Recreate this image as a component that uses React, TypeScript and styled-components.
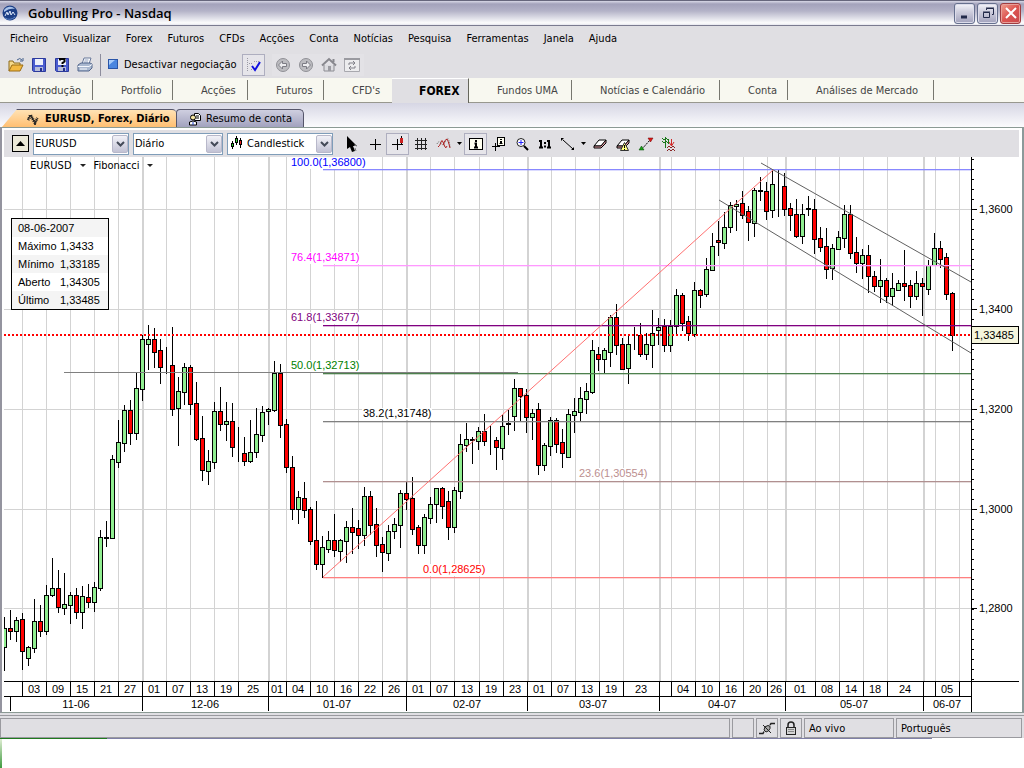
import React from "react";
import styled, { createGlobalStyle, css } from "styled-components";

const UI = '"DejaVu Sans Condensed", "DejaVu Sans", sans-serif';
const CHART = '"Liberation Sans", Arial, sans-serif';

const GlobalStyle = createGlobalStyle`
  * { box-sizing: border-box; }
  body { margin: 0; background: #fff; font-family: ${UI}; font-size: 11px; color: #000; }
  button, select { font: inherit; color: inherit; margin: 0; }
  svg { display: block; }
`;

const Window = styled.main`
  display: flex;
  flex-direction: column;
  background: #e0dfe3;
`;

const TitleBar = styled.header`
  display: flex;
  align-items: center;
  gap: 10px;
  height: 26px;
  padding: 0 3px 0 2px;
  border-top: 1px solid #66667c;
  border-bottom: 1px solid #7b7b90;
  background: linear-gradient(#d8d8e6 0, #a3a2bb 3px, #b4b3c8 10px, #e4e4ec 18px, #fdfdfd 22px, #e6e6ee 100%);
`;

const Title = styled.h1`
  flex: 1;
  margin: 0;
  font: 600 13px/20px "Open Sans", "Noto Sans", sans-serif;
  white-space: nowrap;
`;

const WindowButtons = styled.div`
  display: flex;
  gap: 2px;
`;

const WindowButton = styled.button<{ $close?: boolean }>`
  display: flex;
  align-items: center;
  justify-content: center;
  width: 21px;
  height: 21px;
  padding: 0;
  border: 1px solid ${(p) => (p.$close ? "#a03c40" : "#66708e")};
  border-radius: 3px;
  background: ${(p) =>
    p.$close
      ? "linear-gradient(135deg, #f0a090, #dc5450 50%, #c8484c)"
      : "linear-gradient(#f4f4fa, #cfcfde 40%, #a2a2bc)"};
  box-shadow: inset 0 0 0 1px ${(p) => (p.$close ? "#e8a09a" : "#dcdcea")};
`;

const MenuBar = styled.nav`
  display: flex;
  height: 26px;
  padding: 0 0 2px 2px;
`;

const MenuItem = styled.button`
  padding: 0 7px 0 8px;
  border: 0;
  background: none;
  white-space: nowrap;
`;

const ToolRow = styled.div`
  display: flex;
  align-items: center;
  height: 26px;
  padding-left: 4px;
`;

const ToolButton = styled.button<{ $framed?: boolean; $w?: number }>`
  display: flex;
  flex: none;
  align-items: center;
  justify-content: center;
  width: ${(p) => p.$w ?? 23}px;
  height: 22px;
  padding: 0;
  border: 1px solid ${(p) => (p.$framed ? "#aeaebf" : "transparent")};
  background: ${(p) => (p.$framed ? "#e6e5ea" : "none")};
`;

const Divider = styled.span`
  width: 1px;
  height: 22px;
  margin: 0 7px 0 4px;
  background: #8d8d9d;
`;

const TextTool = styled.button`
  display: flex;
  align-items: center;
  gap: 6px;
  padding: 0 0 2px;
  margin-right: 5px;
  border: 0;
  background: none;
  white-space: nowrap;
`;

const Browse = styled.div`
  display: flex;
  margin-left: 7px;
  background: #e3e2e6;
`;

const Sections = styled.nav`
  display: flex;
  height: 25px;
  background: #f8f8f0;
  border-bottom: 1px solid #98988f;
`;

const Section = styled.button<{ $w: number; $active?: boolean; $plain?: boolean }>`
  display: flex;
  flex: 0 1 ${(p) => p.$w}px;
  align-items: center;
  padding: 0 0 0 28px;
  border: 0;
  background: none;
  color: #444;
  white-space: nowrap;
  ${(p) =>
    !p.$plain &&
    css`
      background: linear-gradient(#77776f, #77776f) right 2px / 1px 20px no-repeat;
    `}
  ${(p) =>
    p.$active &&
    css`
      height: 25px;
      padding-left: 27px;
      background: #e0dfe3;
      border-right: 1px solid #66665c;
      border-top: 1px solid #fff;
      color: #000;
      font: bold 12px "DejaVu Sans Condensed", sans-serif;
    `}
`;

const Documents = styled.div`
  display: flex;
  align-items: flex-end;
  height: 24px;
  padding-left: 2px;
  background: linear-gradient(#d6d6e4, #fbfbfd);
`;

const DocTab = styled.button<{ $active?: boolean }>`
  display: flex;
  align-items: center;
  height: 18px;
  border: 0;
  white-space: nowrap;
  ${(p) =>
    p.$active
      ? css`
          gap: 6px;
          width: 174px;
          padding: 0 0 0 25px;
          background: linear-gradient(#ffe2b4, #ffbf72);
          border-top: 1px solid #55556a;
          border-radius: 0 4px 0 0;
          clip-path: polygon(0 100%, 15px 0, 100% 0, 100% 100%);
          font-weight: bold;
        `
      : css`
          gap: 4px;
          width: 128px;
          padding: 0 0 0 12px;
          background: linear-gradient(#cfcfe0, #a2a2be);
          border: 1px solid #55556a;
          border-bottom: 0;
          border-radius: 4px 5px 0 0;
        `}
`;

const Document = styled.section`
  padding: 2px 3px 0 2px;
  border-top: 1px solid #8b9a94;
  border-bottom: 1px solid #8b9a94;
  border-left: 2px solid #94949f;
  border-right: 2px solid #8b9a9a;
  background: #fff;
`;

const ChartTools = styled.div`
  display: flex;
  align-items: center;
  height: 27px;
  padding-left: 8px;
  background: #e0dfe3;
`;

const Collapse = styled.button`
  display: flex;
  flex: none;
  align-items: center;
  justify-content: center;
  width: 17px;
  height: 17px;
  margin-right: 4px;
  padding: 0;
  border: 1px solid #000;
  background: #ece9d8;
`;

const Combo = styled.div<{ $w: number }>`
  position: relative;
  display: flex;
  align-items: center;
  gap: 4px;
  flex: none;
  width: ${(p) => p.$w}px;
  height: 22px;
  margin-right: 4px;
  padding: 0 0 1px 1px;
  border: 1px solid #7f9db9;
  background: #fff;
`;

const Select = styled.select`
  flex: 1;
  min-width: 0;
  height: 19px;
  padding: 0;
  border: 0;
  appearance: none;
  background: none;
`;

const Arrow = styled.span`
  position: absolute;
  right: 0;
  top: 1px;
  display: flex;
  align-items: center;
  justify-content: center;
  width: 16px;
  height: 18px;
  border: 1px solid #b8b8ca;
  border-radius: 2px;
  background: linear-gradient(#f2f2f8, #c2c2d4);
  pointer-events: none;
`;

const ChartIcons = styled.div`
  display: flex;
  align-items: center;
  padding-left: 3px;
`;

const Plot = styled.div`
  position: relative;
  svg { width: 100%; height: auto; overflow: visible; }
`;

const Overlays = styled.div`
  position: absolute;
  top: 1px;
  left: 26px;
  display: flex;
  gap: 8px;
`;

const Overlay = styled.button`
  display: flex;
  align-items: center;
  gap: 8px;
  height: 15px;
  padding: 0;
  border: 0;
  background: none;

  &::after {
    content: "";
    border: 3px solid transparent;
    border-top-color: #222;
    border-bottom: 0;
  }
`;

const Quote = styled.table`
  position: absolute;
  top: 61px;
  left: 7px;
  width: 98px;
  border: 1px solid #000;
  border-spacing: 0;
  background: #fff;
  font-family: ${CHART};
  font-size: 11px;

  tr:nth-child(odd) { background: #f4f4f4; }
  th, td { height: 18px; padding: 0; font-weight: normal; text-align: left; }
  th { width: 48px; padding-left: 6px; }
`;

const StatusBar = styled.footer`
  display: flex;
  gap: 2px;
  padding: 2px 2px 0 0;
  margin-top: 2px;
  border-top: 1px solid #9a9a9f;
`;

const Status = styled.div<{ $w?: number }>`
  display: flex;
  flex: ${(p) => (p.$w ? `0 0 ${p.$w}px` : "1 1 0")};
  align-items: center;
  height: 20px;
  padding-left: 4px;
  border: 1px solid #9a9a9f;
`;

const StatusIcon = styled(Status)`
  justify-content: center;
  padding-left: 0;
`;

const Desktop = styled.div`
  height: 30px;
  background:
    linear-gradient(to right, #1f7a1f 107px, #7f7fa6 107px, #7f7fa6 91%, transparent 91%) top / 100% 1px no-repeat,
    linear-gradient(#e4f0d8, #3f9a3f) left / 2px 100% no-repeat,
    #fff;
`;

/* ---- icons ---- */

type IconProps = { children: React.ReactNode; w?: number; h?: number };
const Icon = ({ children, w = 16, h = 16 }: IconProps) => (
  <svg width={w} height={h} viewBox={`0 0 ${w} ${h}`} fill="none" aria-hidden="true">
    {children}
  </svg>
);

const Logo = () => (
  <Icon>
    <circle cx="8" cy="8" r="7.5" fill="#1d3f86" />
    <path d="M2 5a7 7 0 0 1 11-1C9 3 6 4 2 7Z" fill="#a9c3ea" />
    <path d="M3 11l2-4 1 3 2-4 1 4 2-3 2 3" stroke="#dfe9fa" />
    <path d="M3 13q5 3 10-1" stroke="#5f86c8" />
  </Icon>
);

const FolderIcon = () => (
  <Icon>
    <path d="M1 14V4h4l1 2h6v3" fill="#f5d98a" stroke="#8d6a1c" />
    <path d="M1 14l3-6h11l-3 6Z" fill="#f3b941" stroke="#9a6c14" />
    <path d="M9 3q3-3 5 0M12 4h3V1" stroke="#44608c" />
  </Icon>
);

const Floppy = ({ query }: { query?: boolean }) => (
  <Icon>
    <path d="M1.500 1.500h13v13H2.500l-1-1Z" fill="#4a5cd0" stroke="#2c3a9c" />
    <rect x="4" y="2" width="8" height="6" fill="#eef1fb" />
    <rect x="4" y="10" width="8" height="4" fill="#b7bdd8" />
    <rect x="9" y="11" width="2" height="3" fill="#23308e" />
    {query && <path d="M6 3.500V2h4.500v2.500L8.500 6v1M8.500 8v2" stroke="#000" strokeWidth="2" />}
  </Icon>
);

const PrinterIcon = () => (
  <Icon>
    <path d="M5 7l2-6h7l-2 6Z" fill="#fff" stroke="#68789a" />
    <path d="M7.500 3h4M7 5h4" stroke="#8fa0c0" />
    <path d="M1 8l3-2h9l2 1v4l-3 3H1Z" fill="#a9b8d0" stroke="#53668c" />
    <path d="M1 9.500h11l3-2M3 12h7" stroke="#f4f7fc" />
  </Icon>
);

const CheckIcon = () => (
  <Icon>
    <path d="M2.500 1v14M4 6.500h3M9 4.500h6M6 12.500h2" stroke="#9a9aa4" strokeDasharray="1 1" />
    <path d="M7 9l3 4 5-8" stroke="#1010e0" strokeWidth="2" />
  </Icon>
);

const RoundArrow = ({ flip }: { flip?: boolean }) => (
  <Icon>
    <circle cx="8" cy="8" r="6.500" fill="#bcbcc0" stroke="#909096" />
    <path
      transform={flip ? "matrix(-1 0 0 1 16 0)" : undefined}
      d="M3.500 8l4-4v2.500h4v3h-4V12Z"
      fill="#ececee"
      stroke="#7c7c84"
    />
  </Icon>
);

const HomeIcon = () => (
  <Icon>
    <path d="M3 8v6h10V8" fill="#dcdce0" stroke="#8c8c92" />
    <path d="M1 8.500L8 2l7 6.500M12.500 5V2" stroke="#88888e" strokeWidth="2" />
    <path d="M7 9h3v5H7Z" fill="#9c9ca2" />
  </Icon>
);

const RefreshIcon = () => (
  <Icon>
    <path d="M.5 1.500h15v13H.5Z" fill="#ececee" stroke="#a8a8ae" />
    <path d="M0 2h16" stroke="#9a9aa0" strokeWidth="2" />
    <path d="M5 8V6h5M9 4l2 2-2 2M11 9v2H6M7 9l-2 2 2 2" stroke="#808088" />
  </Icon>
);

const WaveIcon = () => (
  <Icon w={12} h={13}>
    <path d="M1 8l2.500-5L8 11l2.500-5" stroke="#222" strokeWidth="3" strokeDasharray="1 1" />
    <path d="M1 7l2.500-4L8 11l2.500-5" stroke="#222" />
  </Icon>
);

const AccountIcon = () => (
  <Icon w={13} h={14}>
    <path d="M5.500 1.500h4l2 2v5h-6Z" fill="#fff" stroke="#000" />
    <path d="M7 4h3M7 6h3" stroke="#000" />
    <circle cx="4" cy="5.500" r="2.500" fill="#f4e4a0" stroke="#000" />
    <path d="M.5 13V10q3.500-2 7 0v3Z" fill="#fff" stroke="#000" />
    <path d="M4 10v3" stroke="#24c" />
  </Icon>
);

const Caret = () => (
  <Icon w={9} h={6}>
    <path d="M1 1l3.500 3.500L8 1" stroke="#444a58" strokeWidth="2" />
  </Icon>
);

const CandlesIcon = () => (
  <Icon w={14} h={14}>
    <path d="M3.500 5v8M7.500 0v9M11.500 2v10" stroke="#000" />
    <rect x="2.500" y="7.500" width="2" height="3" fill="#3d3" stroke="#000" />
    <rect x="6.500" y="2.500" width="2" height="4" fill="#3d3" stroke="#000" />
    <rect x="10.500" y="4.500" width="2" height="4" fill="#e22" stroke="#000" />
  </Icon>
);

const PointerIcon = () => (
  <Icon>
    <path d="M3 0v13l3-2 2 5 3-1-2-5h4Z" fill="#000" />
    <path d="M10 9l3 1M11 12l1 3" stroke="#777" />
  </Icon>
);

const CrossIcon = () => (
  <Icon>
    <path d="M8.500 3v11M3 8.500h11" stroke="#000" />
  </Icon>
);

const CandleCrossIcon = () => (
  <Icon>
    <path d="M7.500 3v11M2 8.500h11M11.500 0v9" stroke="#000" />
    <rect x="10" y="2" width="3" height="5" fill="#c22" />
  </Icon>
);

const GridIcon = () => (
  <Icon>
    <path d="M4.500 2v12M8.500 2v12M12.500 2v12M2 4.500h12M2 8.500h12M2 12.500h12" stroke="#222" />
  </Icon>
);

const CurvesIcon = () => (
  <Icon>
    <path d="M2 11q2-1 3-5 1-3 2 0l2 5q1 2 2-1" stroke="#b02020" />
    <path d="M1 8q2-4 4-1t3 1 3-5 3 9" stroke="#666" strokeDasharray="1 1" />
    <path d="M7 9q2-6 4-6 1 1 3 9" stroke="#b02020" />
  </Icon>
);

const DropIcon = () => (
  <Icon w={5} h={3}>
    <path d="M0 0h5L2.500 3Z" fill="#000" />
  </Icon>
);

const InfoIcon = () => (
  <Icon>
    <rect x="1.500" y="2.500" width="13" height="11" fill="#fffff0" stroke="#000" />
    <path d="M8 4v2M6.500 7.500H8V11M6 11.500h4" stroke="#000" strokeWidth="2" />
  </Icon>
);

const CrossInfoIcon = () => (
  <Icon>
    <path d="M4.500 7v8M1 10.500h8" stroke="#000" />
    <rect x="6.500" y="1.500" width="7" height="8" fill="#fffff0" stroke="#000" />
    <path d="M10 3v1M10 5v3" stroke="#000" strokeWidth="2" />
    <path d="M8.500 7.500h3" stroke="#000" />
  </Icon>
);

const ZoomIcon = () => (
  <Icon>
    <circle cx="7" cy="6.500" r="4" fill="#fff" stroke="#222" />
    <path d="M10 10l4 4" stroke="#000" strokeWidth="2" />
    <path d="M7 4v5M4.500 6.500h5" stroke="#22f" />
  </Icon>
);

const OneToOneIcon = () => (
  <Icon>
    <path d="M4 4v8M2 5h2M2 11.500h4M12 4v8M10 5h2M10 11.500h4" stroke="#000" strokeWidth="2" />
    <path d="M7 6h2v2H7ZM7 9.500h2v2H7Z" fill="#000" />
  </Icon>
);

const SegmentIcon = () => (
  <Icon>
    <path d="M3 4l10 9" stroke="#000" />
    <path d="M1 2h3L1 5ZM14 11v3h-3Z" fill="#000" />
  </Icon>
);

const Eraser = ({ warn }: { warn?: boolean }) => (
  <Icon>
    <path d="M2 10l5-6h7l-5 6Z" fill="#fff" stroke="#000" />
    <path d="M2 10v2h7l5-5V4L9 10Z" fill="#e8a0a8" stroke="#000" />
    {warn && (
      <>
        <path d="M5.500 14.500L9.500 6.500l4 8Z" fill="#ffff80" stroke="#333" />
        <path d="M9.500 9v3M9.500 13v1" stroke="#000" />
      </>
    )}
  </Icon>
);

const TrendIcon = () => (
  <Icon>
    <path d="M4 13l8-9" stroke="#000" strokeDasharray="2 1" />
    <path d="M10 2h5l-2.500 4Z" fill="#e01818" stroke="#600" strokeWidth=".5" />
    <path d="M1 14h5l-2.500-4Z" fill="#18a018" stroke="#040" strokeWidth=".5" />
  </Icon>
);

const SignalsIcon = () => (
  <Icon>
    <path d="M1 2l2 2 2-2 2 2M1 5l2 2 2-2 2 2M4.500 1v11M7.500 3v5" stroke="#187818" />
    <path d="M10.500 3v7M8 6l2.500 4L13 6" stroke="#d02828" />
    <path d="M6 12l2-2 2 2 2-2 2 2M6 15l2-2 2 2 2-2 2 2" stroke="#8a2424" />
  </Icon>
);

const PlugIcon = () => (
  <Icon>
    <path d="M0 13.500h4l1-2M11 5l1-1.500h4" stroke="#222" strokeWidth="1.500" />
    <path d="M5 10q0-4 4-4.500 3 0 2 3-1 3-4 3.500Z" fill="#aaa" stroke="#222" />
    <path d="M4 5l8 8" stroke="#222" />
  </Icon>
);

const LockIcon = () => (
  <Icon>
    <path d="M5 7V5q0-3 3-3t3 3v2" stroke="#222" strokeWidth="1.500" />
    <rect x="3.500" y="7.500" width="9" height="7" fill="#d4d4d4" stroke="#222" />
    <path d="M5 9.500h6M5 11.500h6" stroke="#888" />
  </Icon>
);

/* ---- chart data: pixel prices, [kind, high, body top, body bottom, low] ---- */

type Candle = ["u" | "d" | "-" | "|", number, number, number, number];

const candles: Candle[] = [
  ["u", 617, 628, 647, 670], ["d", 610, 628, 631, 639], ["u", 617, 620, 631, 641], ["d", 613, 619, 651, 669],
  ["u", 646, 647, 658, 665], ["u", 599, 621, 648, 652], ["d", 605, 621, 631, 636], ["u", 585, 595, 631, 634],
  ["u", 558, 588, 595, 596], ["d", 570, 588, 607, 612], ["u", 573, 604, 608, 614], ["u", 592, 595, 605, 623],
  ["d", 588, 595, 612, 618], ["u", 586, 596, 612, 628], ["d", 584, 597, 602, 607], ["u", 582, 587, 602, 611],
  ["u", 530, 537, 588, 590], ["-", 521, 538, 538, 546], ["u", 455, 459, 538, 538], ["u", 420, 442, 462, 467],
  ["u", 405, 410, 443, 451], ["d", 400, 410, 433, 444], ["u", 372, 388, 433, 439], ["u", 335, 339, 389, 400],
  ["u", 325, 339, 344, 369], ["d", 328, 339, 352, 367], ["d", 339, 350, 367, 383], ["|", 347, 0, 0, 373],
  ["d", 327, 365, 409, 415], ["u", 377, 391, 408, 445], ["u", 363, 367, 392, 404], ["d", 365, 367, 404, 414],
  ["d", 382, 403, 439, 440], ["d", 416, 438, 470, 480], ["u", 450, 461, 471, 484], ["u", 402, 411, 462, 468],
  ["d", 387, 411, 424, 430], ["u", 402, 421, 424, 440], ["d", 403, 421, 447, 456], ["|", 427, 0, 0, 461],
  ["d", 437, 453, 461, 465], ["u", 420, 452, 461, 462], ["u", 408, 434, 452, 457], ["u", 406, 412, 435, 441],
  ["u", 408, 409, 411, 424], ["u", 361, 373, 410, 411], ["d", 364, 373, 425, 437], ["d", 419, 424, 467, 472],
  ["d", 456, 467, 509, 519], ["u", 491, 497, 509, 523], ["d", 482, 498, 510, 517], ["d", 507, 509, 541, 544],
  ["d", 501, 540, 564, 569], ["u", 536, 547, 564, 577], ["u", 531, 540, 549, 552], ["d", 514, 540, 550, 556],
  ["u", 539, 540, 551, 561], ["u", 521, 527, 541, 562], ["d", 508, 527, 532, 553], ["d", 520, 528, 535, 548],
  ["u", 487, 496, 535, 545], ["d", 491, 496, 525, 534], ["d", 508, 524, 545, 556], ["d", 537, 544, 552, 571],
  ["u", 525, 531, 553, 560], ["u", 518, 524, 531, 538], ["u", 490, 493, 525, 547], ["d", 482, 493, 499, 509],
  ["d", 477, 498, 529, 534], ["d", 525, 527, 545, 553], ["u", 514, 517, 545, 553], ["u", 497, 504, 518, 523],
  ["u", 488, 488, 504, 522], ["d", 487, 488, 506, 518], ["d", 491, 501, 527, 539], ["u", 487, 490, 527, 532],
  ["u", 434, 444, 491, 498], ["u", 423, 439, 445, 451], ["-", 437, 440, 440, 463], ["u", 427, 431, 441, 449],
  ["d", 414, 431, 441, 445], ["|", 426, 0, 0, 454], ["d", 437, 440, 447, 469], ["u", 415, 426, 448, 459],
  ["-", 410, 424, 424, 434], ["u", 379, 388, 416, 430], ["d", 388, 388, 396, 420], ["d", 389, 395, 417, 432],
  ["u", 409, 413, 417, 439], ["d", 403, 409, 465, 474], ["u", 443, 445, 465, 470], ["u", 417, 420, 446, 455],
  ["d", 418, 420, 444, 452], ["d", 429, 442, 453, 467], ["u", 409, 414, 457, 457], ["u", 398, 411, 415, 432],
  ["u", 387, 398, 412, 421], ["u", 383, 391, 399, 413], ["u", 340, 350, 392, 393], ["d", 347, 354, 359, 370],
  ["u", 348, 350, 359, 373], ["u", 315, 317, 352, 366], ["d", 304, 317, 345, 354], ["d", 338, 344, 369, 369],
  ["u", 335, 344, 368, 383], ["|", 327, 0, 0, 349], ["d", 323, 335, 354, 356], ["u", 333, 344, 354, 359],
  ["u", 310, 333, 345, 367], ["u", 318, 327, 330, 344], ["d", 319, 326, 345, 351], ["u", 320, 326, 345, 351],
  ["u", 289, 295, 326, 334], ["d", 293, 295, 323, 330], ["d", 316, 321, 333, 340], ["u", 282, 290, 334, 336],
  ["d", 289, 290, 295, 307], ["u", 258, 269, 294, 296], ["u", 233, 246, 270, 270], ["d", 221, 240, 242, 255],
  ["u", 212, 227, 243, 248], ["u", 202, 205, 227, 232], ["u", 200, 204, 206, 230], ["d", 191, 203, 215, 218],
  ["d", 206, 211, 222, 240], ["u", 188, 190, 223, 236], ["-", 177, 191, 191, 200], ["d", 182, 191, 211, 219],
  ["u", 169, 184, 210, 217], ["|", 169, 0, 0, 216], ["d", 173, 186, 209, 215], ["d", 203, 208, 215, 230],
  ["d", 199, 214, 236, 237], ["u", 204, 214, 236, 243], ["-", 196, 209, 209, 215], ["d", 199, 209, 239, 253],
  ["d", 227, 238, 247, 251], ["d", 228, 246, 269, 278], ["u", 244, 248, 268, 279], ["u", 231, 237, 249, 249],
  ["u", 205, 214, 238, 247], ["d", 205, 214, 253, 258], ["d", 237, 252, 263, 272], ["u", 249, 255, 263, 278],
  ["d", 245, 255, 276, 292], ["d", 271, 276, 286, 291], ["u", 259, 280, 286, 302], ["d", 278, 280, 296, 302],
  ["u", 273, 288, 296, 305], ["u", 280, 283, 290, 290], ["d", 250, 283, 286, 300], ["d", 280, 285, 296, 307],
  ["u", 271, 283, 296, 299], ["d", 278, 283, 286, 315], ["u", 260, 265, 289, 294], ["u", 233, 248, 265, 265],
  ["d", 241, 248, 259, 267], ["d", 253, 257, 294, 299], ["d", 292, 293, 335, 350],
];

const days: [number, string][] = [
  [4, ""], [22, "03"], [46, "09"], [70, "15"], [94, "21"], [118, "27"], [142, "01"], [166, "07"], [190, "13"],
  [214, "19"], [238, "25"], [268, "01"], [286, "04"], [310, "10"], [334, "16"], [358, "22"], [382, "26"],
  [406, "01"], [430, "07"], [454, "13"], [479, "19"], [503, "23"], [527, "01"], [551, "07"], [575, "13"],
  [599, "19"], [623, "23"], [659, ""], [671, "04"], [695, "10"], [719, "16"], [743, "20"], [767, "26"],
  [785, "01"], [815, "08"], [839, "14"], [863, "18"], [887, "24"], [923, ""], [935, "05"], [959, ""], [971, ""],
];

const months: [number, string][] = [
  [10, "11-06"], [142, "12-06"], [268, "01-07"], [406, "02-07"], [527, "03-07"], [659, "04-07"],
  [785, "05-07"], [923, "06-07"], [971, ""],
];

const prices: [number, string][] = [
  [209, "1,3600"], [309, "1,3400"], [409, "1,3200"], [509, "1,3000"], [608, "1,2800"],
];

const fibs = [
  { y: 169, color: "#0000ff", line: "#8888ff", x: 291, ty: 166, w: 75, label: "100.0(1,36800)" },
  { y: 265, color: "#ff00ff", line: "#ff99ff", x: 291, ty: 261, w: 69, label: "76.4(1,34871)" },
  { y: 325, color: "#800080", line: "#800080", x: 291, ty: 321, w: 69, label: "61.8(1,33677)" },
  { y: 373, color: "#008000", line: "#4d804d", x: 291, ty: 369, w: 69, label: "50.0(1,32713)" },
  { y: 421, color: "#000000", line: "#808080", x: 363, ty: 417, w: 69, label: "38.2(1,31748)" },
  { y: 481, color: "#bc8f8f", line: "#b09090", x: 579, ty: 477, w: 69, label: "23.6(1,30554)" },
  { y: 577, color: "#ff0000", line: "#ff8080", x: 423, ty: 573, w: 63, label: "0.0(1,28625)" },
];

const mid = (list: [number, string][], i: number) => Math.round((list[i][0] + list[i + 1][0]) / 2);

const PriceChart = () => (
  <svg viewBox="4 157 1015 555" fontFamily={CHART} fontSize="11" role="img" aria-label="EURUSD">
    <g fill="#d3d3d3" shapeRendering="crispEdges">
      {prices.map(([y]) => (
        <rect key={y} x="4" y={y} width="967" height="1" />
      ))}
      {days.slice(1, -1).map(([x]) => (
        <rect key={x} x={x} y="157" width={months.some(([m]) => m === x) ? 2 : 1} height="524" />
      ))}
    </g>
    <g shapeRendering="crispEdges">
      {candles.map(([kind, high, top, bottom, low], i) => {
        const x = 4 + 6 * i;
        const left = Math.max(x - 2, 4);
        const right = x + 3;
        return (
          <g key={i}>
            <rect x={x} y={high} width="1" height={low - high + 1} fill="#000" />
            {kind === "-" && <rect x={x - 2} y={top - 1} width="5" height="2" fill="#000" />}
            {(kind === "u" || kind === "d") && (
              <>
                <rect x={left} y={top} width={right - left} height={bottom - top + 1} fill="#000" />
                <rect
                  x={Math.max(x - 1, 4)}
                  y={top + 1}
                  width={x + 2 - Math.max(x - 1, 4)}
                  height={Math.max(bottom - top - 1, 1)}
                  fill={kind === "u" ? "#90ee90" : "#ff0000"}
                />
              </>
            )}
          </g>
        );
      })}
    </g>
    <g shapeRendering="crispEdges">
      <rect x="64" y="372" width="454" height="1" fill="#808080" />
      {fibs.map((f) => (
        <g key={f.y}>
          <rect x="323" y={f.y} width="648" height="1" fill={f.line} />
          <rect x="323" y={f.y + 1} width="648" height="1" fill={f.line} opacity="0.3" />
        </g>
      ))}
    </g>
    <g strokeWidth="1">
      <path d="M323 577L773 170" stroke="#ff7070" />
      <path d="M761 163L971 282M719 200L971 353" stroke="#606060" />
    </g>
    <path d="M4 335H971" stroke="#ff0000" strokeWidth="2" strokeDasharray="2 2" shapeRendering="crispEdges" />
    {fibs.map((f) => (
      <g key={f.label}>
        <rect x={f.x - 1} y={f.ty - 9} width={f.w + 1} height="12" fill="#fff" />
        <text x={f.x} y={f.ty} fill={f.color}>
          {f.label}
        </text>
      </g>
    ))}
    <g shapeRendering="crispEdges">
      <rect x="971" y="157" width="1" height="555" />
      <rect x="4" y="681" width="1015" height="1" />
      <rect x="4" y="696" width="968" height="1" />
      {Array.from({ length: 53 }, (_, i) => (
        <rect key={i} x="971" y={159 + 10 * i} width="3" height="1" />
      ))}
      {prices.map(([y]) => (
        <rect key={y} x="971" y={y} width="6" height="1" />
      ))}
      {days.slice(1).map(([x]) => (
        <rect key={x} x={x} y="681" width="1" height="15" />
      ))}
      {months.map(([x]) => (
        <rect key={x} x={x} y="696" width="1" height="15" />
      ))}
    </g>
    {prices.map(([y, label]) => (
      <text key={y} x="979" y={y + 4}>
        {label}
      </text>
    ))}
    <g textAnchor="middle">
      {days.slice(0, -1).map(([x, label], i) => (
        <text key={x} x={mid(days, i)} y="693">
          {label}
        </text>
      ))}
      {months.slice(0, -1).map(([x, label], i) => (
        <text key={x} x={mid(months, i)} y="708">
          {label}
        </text>
      ))}
    </g>
    <rect x="971.500" y="326.500" width="47" height="17" fill="#f5f5dc" stroke="#000" />
    <text x="974" y="339">
      1,33485
    </text>
  </svg>
);

const menu = [
  "Ficheiro", "Visualizar", "Forex", "Futuros", "CFDs", "Acções", "Conta", "Notícias", "Pesquisa",
  "Ferramentas", "Janela", "Ajuda",
];

const sections: [string, number][] = [
  ["Introdução", 93], ["Portfolio", 80], ["Acções", 75], ["Futuros", 76], ["CFD's", 68], ["FOREX", 77],
  ["Fundos UMA", 103], ["Notícias e Calendário", 148], ["Conta", 68], ["Análises de Mercado", 146],
];

const quote = [
  ["Máximo", "1,3433"], ["Mínimo", "1,33185"], ["Aberto", "1,34305"], ["Último", "1,33485"],
];

export default function App() {
  return (
    <>
      <GlobalStyle />
      <Window>
        <TitleBar>
          <Logo />
          <Title>Gobulling Pro - Nasdaq</Title>
          <WindowButtons>
            <WindowButton aria-label="Minimizar">
              <Icon>
                <path d="M4 12h6" stroke="#222a4a" strokeWidth="3" />
              </Icon>
            </WindowButton>
            <WindowButton aria-label="Restaurar">
              <Icon>
                <path d="M6.500 5V3.500h7v6H12M6 3h8" stroke="#222a4a" />
                <path d="M3.500 7.500h6v5h-6ZM3 7h7" stroke="#222a4a" />
              </Icon>
            </WindowButton>
            <WindowButton $close aria-label="Fechar">
              <Icon>
                <path d="M3 3l10 10M13 3L3 13" stroke="#fff" strokeWidth="2" />
              </Icon>
            </WindowButton>
          </WindowButtons>
        </TitleBar>

        <MenuBar>
          {menu.map((m) => (
            <MenuItem key={m}>{m}</MenuItem>
          ))}
        </MenuBar>

        <ToolRow>
          <ToolButton aria-label="Abrir"><FolderIcon /></ToolButton>
          <ToolButton aria-label="Guardar"><Floppy /></ToolButton>
          <ToolButton aria-label="Guardar como"><Floppy query /></ToolButton>
          <ToolButton aria-label="Imprimir"><PrinterIcon /></ToolButton>
          <Divider />
          <TextTool>
            <Icon w={10} h={10}>
              <rect x=".5" y=".5" width="9" height="9" fill="#4a86e0" stroke="#2a55a8" />
              <path d="M1 6V1h6Z" fill="#a8ccfa" />
            </Icon>
            Desactivar negociação
          </TextTool>
          <ToolButton $framed aria-label="Confirmar"><CheckIcon /></ToolButton>
          <Browse>
            <ToolButton aria-label="Recuar"><RoundArrow /></ToolButton>
            <ToolButton aria-label="Avançar"><RoundArrow flip /></ToolButton>
            <ToolButton aria-label="Início"><HomeIcon /></ToolButton>
            <ToolButton aria-label="Actualizar"><RefreshIcon /></ToolButton>
          </Browse>
        </ToolRow>

        <Sections>
          {sections.map(([label, w]) => (
            <Section key={label} $w={w} $active={label === "FOREX"} $plain={label === "CFD's"}>
              {label}
            </Section>
          ))}
        </Sections>

        <Documents>
          <DocTab $active><WaveIcon />EURUSD, Forex, Diário</DocTab>
          <DocTab><AccountIcon />Resumo de conta</DocTab>
        </Documents>

        <Document>
          <ChartTools>
            <Collapse aria-label="Recolher">
              <Icon w={9} h={5}>
                <path d="M0 5L4.500 0 9 5Z" fill="#000" />
              </Icon>
            </Collapse>
            <Combo $w={96}>
              <Select aria-label="Instrumento"><option>EURUSD</option></Select>
              <Arrow><Caret /></Arrow>
            </Combo>
            <Combo $w={90}>
              <Select aria-label="Período"><option>Diário</option></Select>
              <Arrow><Caret /></Arrow>
            </Combo>
            <Combo $w={106}>
              <CandlesIcon />
              <Select aria-label="Tipo de gráfico"><option>Candlestick</option></Select>
              <Arrow><Caret /></Arrow>
            </Combo>
            <ChartIcons>
              <ToolButton aria-label="Seleccionar"><PointerIcon /></ToolButton>
              <ToolButton aria-label="Cruz"><CrossIcon /></ToolButton>
              <ToolButton $framed aria-label="Cruz em vela"><CandleCrossIcon /></ToolButton>
              <ToolButton aria-label="Grelha"><GridIcon /></ToolButton>
              <ToolButton aria-label="Indicadores"><CurvesIcon /></ToolButton>
              <ToolButton $w={9} aria-label="Mais indicadores"><DropIcon /></ToolButton>
              <ToolButton $framed aria-label="Informação"><InfoIcon /></ToolButton>
              <ToolButton aria-label="Valor no cursor"><CrossInfoIcon /></ToolButton>
              <ToolButton aria-label="Ampliar"><ZoomIcon /></ToolButton>
              <ToolButton aria-label="Escala 1:1"><OneToOneIcon /></ToolButton>
              <ToolButton aria-label="Linha"><SegmentIcon /></ToolButton>
              <ToolButton $w={9} aria-label="Mais linhas"><DropIcon /></ToolButton>
              <ToolButton aria-label="Apagar"><Eraser /></ToolButton>
              <ToolButton aria-label="Apagar tudo"><Eraser warn /></ToolButton>
              <ToolButton aria-label="Tendência"><TrendIcon /></ToolButton>
              <ToolButton aria-label="Sinais"><SignalsIcon /></ToolButton>
            </ChartIcons>
          </ChartTools>
          <Plot>
            <PriceChart />
            <Overlays>
              <Overlay>EURUSD</Overlay>
              <Overlay>Fibonacci</Overlay>
            </Overlays>
            <Quote>
              <tbody>
                <tr><th colSpan={2}>08-06-2007</th></tr>
                {quote.map(([name, value]) => (
                  <tr key={name}><th scope="row">{name}</th><td>{value}</td></tr>
                ))}
              </tbody>
            </Quote>
          </Plot>
        </Document>

        <StatusBar>
          <Status />
          <Status $w={22} />
          <StatusIcon $w={22}><PlugIcon /></StatusIcon>
          <StatusIcon $w={22}><LockIcon /></StatusIcon>
          <Status $w={90}>Ao vivo</Status>
          <Status $w={126}>Português</Status>
        </StatusBar>
      </Window>
      <Desktop />
    </>
  );
}
